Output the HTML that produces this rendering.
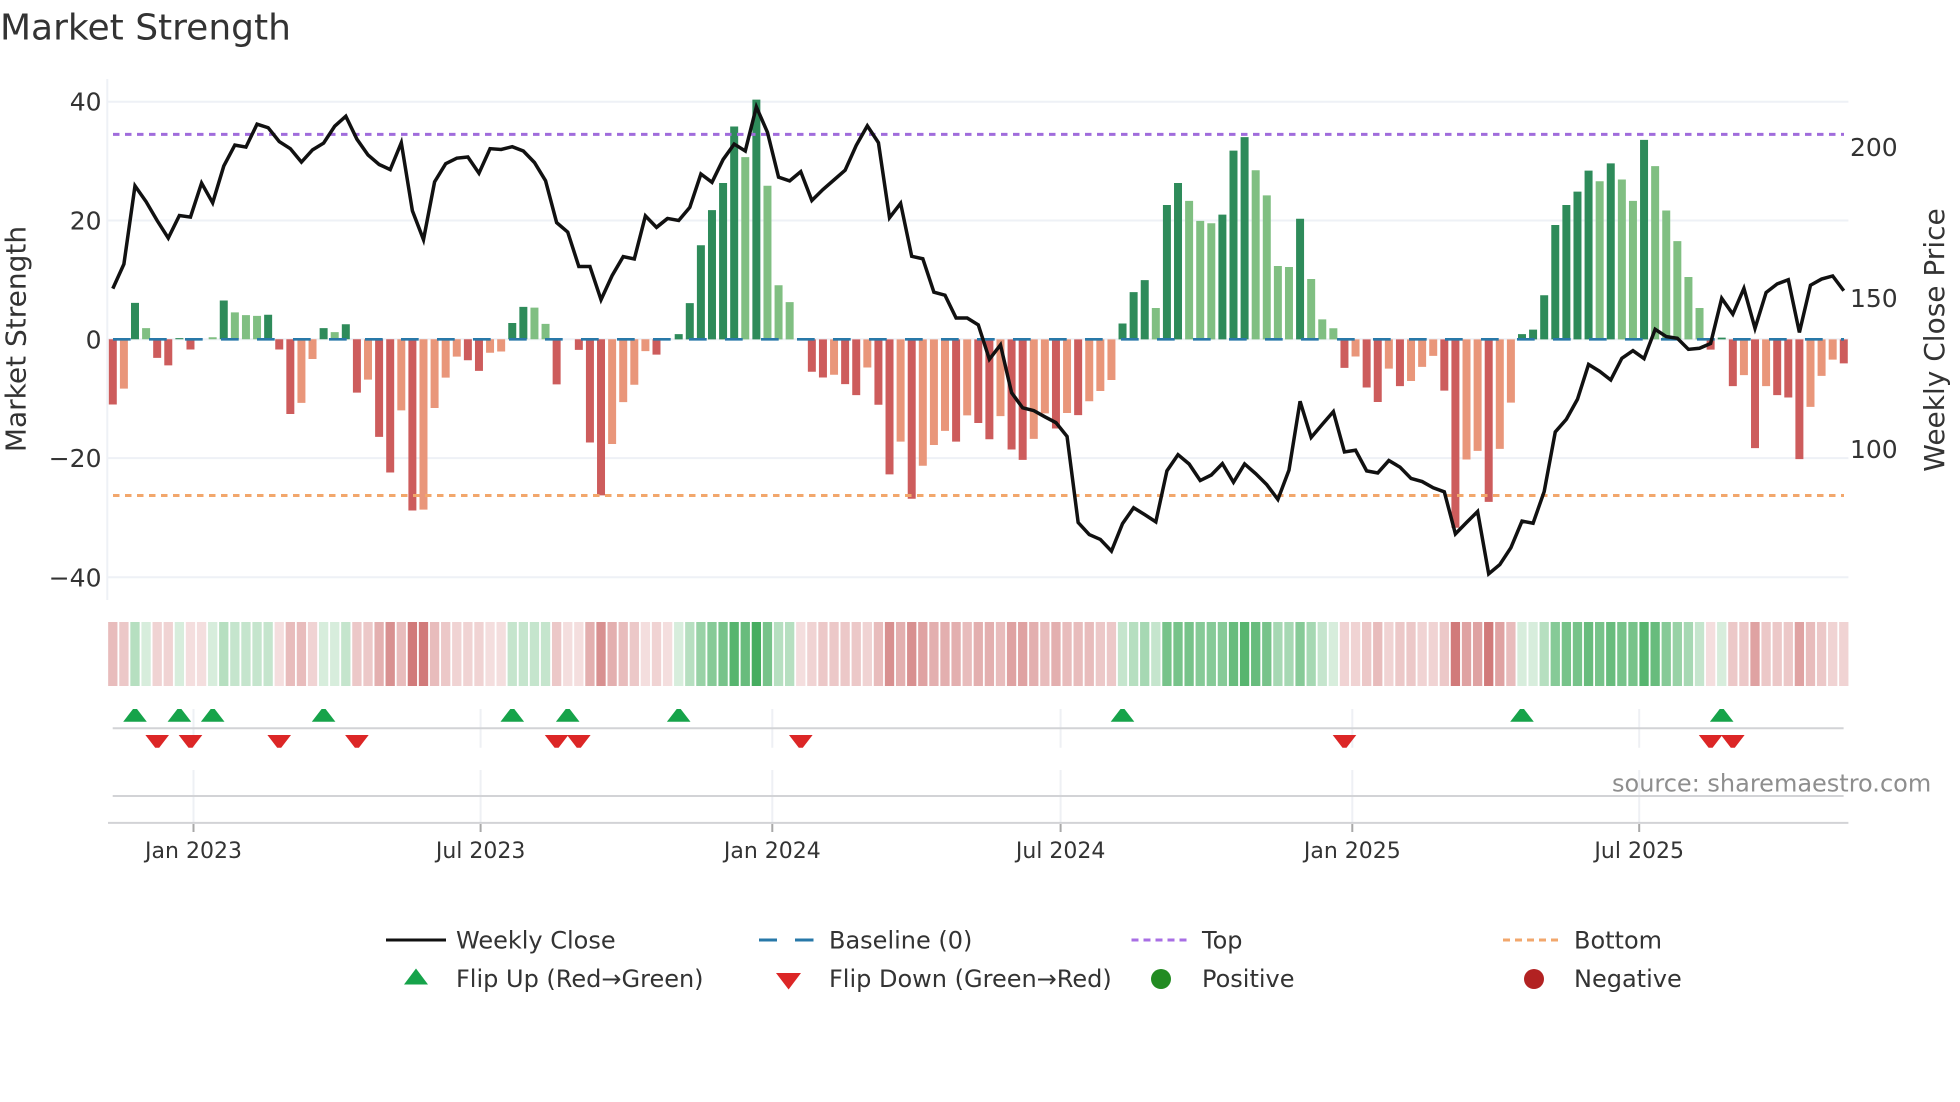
<!DOCTYPE html>
<html><head><meta charset="utf-8"><title>Market Strength</title>
<style>
html,body{margin:0;padding:0;background:#fff}
svg{display:block}
text{font-family:"DejaVu Sans","Liberation Sans",sans-serif;fill:#333}
</style></head>
<body>
<svg width="1960" height="1102" viewBox="0 0 1960 1102" xmlns="http://www.w3.org/2000/svg">
<rect width="1960" height="1102" fill="#fff"/>
<text x="0" y="39.5" font-size="36">Market Strength</text>

<!-- grid -->
<g stroke="#EEF1F6" stroke-width="2" fill="none">
<path d="M107.3 79V600"/>
<path d="M107 101.7H1848.4M107 220.5H1848.4M107 339.3H1848.4M107 458.1H1848.4M107 577.3H1848.4"/>
</g>

<!-- bars group 1 -->
<g transform="translate(112.8,0) scale(11.096,0.3954)" stroke-width="0.72" fill="none">
<path stroke="#2E8B5A" d="M2 858V766M6 858V855M10 858V760M14 858V796M19 858V830M21 858V820M36 858V817M37 858V776"/>
<path stroke="#80BF82" d="M3 858V830M9 858V853M11 858V790M12 858V797M13 858V799M20 858V840M38 858V778M39 858V819"/>
<path stroke="#CD5C5C" d="M0 858V1023M4 858V905M5 858V924M7 858V884M15 858V884M16 858V1047M22 858V993M24 858V1105M25 858V1195M27 858V1291M32 858V911M33 858V938M40 858V972M42 858V885M43 858V1119M44 858V1253M49 858V897"/>
<path stroke="#E9967A" d="M1 858V983M17 858V1019M18 858V908M23 858V960M26 858V1038M28 858V1289M29 858V1032M30 858V955M31 858V902M34 858V892M35 858V889M45 858V1123M46 858V1017M47 858V973M48 858V888"/>
</g>
<!-- bars group 2 -->
<g transform="translate(112.8,80) scale(11.096,0.34438)" stroke-width="0.72" fill="none">
<path stroke="#2E8B5A" d="M51 753V738M52 753V648M53 753V480M54 753V378M55 753V299M56 753V135M58 753V57M91 753V707M92 753V616M93 753V581M95 753V363M96 753V299M100 753V391M101 753V205M102 753V166M107 753V403M127 753V738M128 753V725M129 753V625M130 753V421M131 753V363M132 753V324M133 753V263M135 753V242M138 753V174M145 753V748"/>
<path stroke="#80BF82" d="M57 753V224M59 753V307M60 753V596M61 753V645M94 753V662M97 753V351M98 753V409M99 753V416M103 753V262M104 753V335M105 753V540M106 753V543M108 753V578M109 753V695M110 753V721M134 753V294M136 753V289M137 753V351M139 753V250M140 753V379M141 753V468M142 753V572M143 753V662"/>
<path stroke="#CD5C5C" d="M63 753V847M64 753V864M66 753V883M67 753V915M69 753V943M70 753V1145M72 753V1216M76 753V1050M78 753V996M79 753V1043M81 753V1073M82 753V1103M85 753V1012M87 753V973M111 753V836M113 753V893M114 753V935M116 753V889M120 753V902M121 753V1300M124 753V1225M144 753V783M146 753V889M148 753V1069M150 753V915M151 753V922M152 753V1101M156 753V823"/>
<path stroke="#E9967A" d="M65 753V856M68 753V835M71 753V1050M73 753V1120M74 753V1060M75 753V1019M77 753V974M80 753V976M83 753V1042M84 753V968M86 753V967M88 753V933M89 753V903M90 753V871M112 753V803M115 753V838M117 753V874M118 753V833M119 753V801M122 753V1102M123 753V1077M125 753V1071M126 753V937M147 753V857M149 753V889M153 753V949M154 753V859M155 753V812"/>
</g>

<!-- baseline, top, bottom -->
<path d="M113 339.3H1844" stroke="#2878A8" stroke-width="2.6" stroke-dasharray="17.7 18.3" fill="none"/>
<path d="M113 134.4H1844" stroke="#A06CDC" stroke-width="3" stroke-dasharray="6.5 5.5" fill="none"/>
<path d="M113 495.5H1844" stroke="#F2A76C" stroke-width="3" stroke-dasharray="6.5 5.5" fill="none"/>

<!-- weekly close -->
<g transform="translate(112.8,0) scale(11.096,0.3954)" fill="none">
<polyline vector-effect="non-scaling-stroke" stroke="#111" stroke-width="3.5" points="0,730 1,668 2,470 3,510 4,558 5,602 6,545 7,549 8,463 9,513 10,420 11,367 12,372 13,314 14,323 15,358 16,376 17,410 18,379 19,362 20,319 21,294 22,352 23,392 24,416 25,429 26,361 27,533 28,606 29,460 30,414 31,400 32,397 33,438 34,376 35,378 36,371 37,382 38,411 39,457 40,563 41,587 42,674 43,674 44,758 45,697 46,649 47,655 48,546 49,575 50,552.4"/>
</g>
<g transform="translate(112.8,80) scale(11.096,0.34438)" fill="none">
<polyline vector-effect="non-scaling-stroke" stroke="#111" stroke-width="3.5" points="49,428 50,402 51,408 52,370 53,273 54,297 55,231 56,186 57,206 58,78 59,152 60,282 61,293 62,266 63,350 64,318 65,290 66,262 67,190 68,133 69,182 70,400 71,358 72,512 73,519 74,616 75,625 76,691 77,691 78,711 79,811 80,769 81,908 82,952 83,960 84,978 85,995 86,1035 87,1285 88,1320 89,1334 90,1368 91,1288 92,1242 93,1262 94,1283 95,1135 96,1088 97,1115 98,1163 99,1147 100,1114 101,1168 102,1115 103,1143 104,1175 105,1218 106,1133 107,933 108,1038 109,1000 110,963 111,1080 112,1075 113,1135 114,1141 115,1105 116,1124 117,1157 118,1166 119,1184 120,1196 121,1318 122,1285 123,1253 124,1434 125,1407 126,1358 127,1281 128,1287 129,1195 130,1022 131,985 132,927 133,826 134,846 135,871 136,808 137,786 138,809 139,724 140,745 141,750 142,782 143,779 144,765 145,634 146,680 147,605 148,721 149,617 150,592 151,580 152,733 153,596 154,578 155,569 156,612"/>
</g>

<!-- axis labels -->
<g font-size="25" text-anchor="end">
<text x="101.5" y="110.7">40</text>
<text x="101.5" y="229.6">20</text>
<text x="101.5" y="348.4">0</text>
<text x="101.5" y="467.2">−20</text>
<text x="101.5" y="586.4">−40</text>
</g>
<g font-size="25">
<text x="1850" y="156.2">200</text>
<text x="1850" y="307">150</text>
<text x="1850" y="458.2">100</text>
</g>
<text transform="translate(25.5,339) rotate(-90)" font-size="28" text-anchor="middle">Market Strength</text>
<text transform="translate(1944,340) rotate(-90)" font-size="28" text-anchor="middle">Weekly Close Price</text>

<!-- heat strip -->
<g transform="translate(112.8,622) scale(11.096,1)" stroke-width="0.838" fill="none">
<g stroke="#28A046">
<path stroke-opacity=".19" d="M3 0v64M6 0v64M9 0v64M19 0v64M20 0v64M51 0v64M110 0v64M127 0v64M128 0v64M145 0v64"/>
<path stroke-opacity=".27" d="M11 0v64M12 0v64M13 0v64M14 0v64M21 0v64M36 0v64M37 0v64M38 0v64M39 0v64M91 0v64M94 0v64M109 0v64M143 0v64"/>
<path stroke-opacity=".34" d="M2 0v64M10 0v64M52 0v64M60 0v64M61 0v64M92 0v64M129 0v64"/>
<path stroke-opacity=".41" d="M93 0v64M105 0v64M106 0v64M108 0v64M142 0v64"/>
<path stroke-opacity=".48" d="M53 0v64M141 0v64"/>
<path stroke-opacity=".56" d="M54 0v64M98 0v64M99 0v64M100 0v64M107 0v64M130 0v64M140 0v64"/>
<path stroke-opacity=".63" d="M55 0v64M59 0v64M95 0v64M96 0v64M97 0v64M104 0v64M131 0v64M132 0v64M134 0v64M136 0v64M137 0v64"/>
<path stroke-opacity=".7" d="M57 0v64M101 0v64M103 0v64M133 0v64M135 0v64M139 0v64"/>
<path stroke-opacity=".78" d="M56 0v64M102 0v64M138 0v64"/>
<path stroke-opacity=".86" d="M58 0v64"/>
</g>
<g stroke="#B22222">
<path stroke-opacity=".15" d="M7 0v64M8 0v64M15 0v64M34 0v64M35 0v64M41 0v64M42 0v64M48 0v64M50 0v64M62 0v64M144 0v64"/>
<path stroke-opacity=".2" d="M4 0v64M5 0v64M18 0v64M31 0v64M32 0v64M33 0v64M49 0v64M63 0v64M68 0v64M111 0v64M112 0v64M115 0v64M118 0v64M119 0v64M155 0v64M156 0v64"/>
<path stroke-opacity=".25" d="M1 0v64M22 0v64M23 0v64M30 0v64M40 0v64M47 0v64M64 0v64M65 0v64M66 0v64M67 0v64M89 0v64M90 0v64M113 0v64M116 0v64M117 0v64M120 0v64M146 0v64M147 0v64M149 0v64M150 0v64M151 0v64M154 0v64"/>
<path stroke-opacity=".3" d="M0 0v64M16 0v64M17 0v64M26 0v64M29 0v64M46 0v64M69 0v64M77 0v64M80 0v64M84 0v64M86 0v64M87 0v64M88 0v64M114 0v64M126 0v64M153 0v64"/>
<path stroke-opacity=".36" d="M24 0v64M43 0v64M45 0v64M71 0v64M74 0v64M75 0v64M76 0v64M78 0v64M79 0v64M83 0v64M85 0v64"/>
<path stroke-opacity=".42" d="M73 0v64M81 0v64M82 0v64M122 0v64M123 0v64M125 0v64M148 0v64M152 0v64"/>
<path stroke-opacity=".5" d="M25 0v64M44 0v64M70 0v64M72 0v64"/>
<path stroke-opacity=".6" d="M27 0v64M28 0v64M121 0v64M124 0v64"/>
</g>
</g>

<!-- flip rows grid -->
<g stroke="#EEF0F4" stroke-width="2" fill="none">
<path d="M193.5 709V747.7M480.6 709V747.7M772.3 709V747.7M1060.6 709V747.7M1352.3 709V747.7M1639.2 709V747.7"/>
<path d="M193.5 770V823M480.6 770V823M772.3 770V823M1060.6 770V823M1352.3 770V823M1639.2 770V823"/>
</g>
<g stroke="#D2D3D6" stroke-width="2" fill="none">
<path d="M112.7 728.2H1843.6"/>
<path d="M112.7 796H1843.6"/>
<path d="M108 822.9H1848.4"/>
</g>
<path d="M193.5 824V832M480.6 824V832M772.3 824V832M1060.6 824V832M1352.3 824V832M1639.2 824V832" stroke="#A8A8A8" stroke-width="2" fill="none"/>

<!-- up markers -->
<g fill="#16A34A">
<path transform="translate(135,709)" d="M-11.8 12.7L-2 0H2L11.8 12.7Z"/>
<path transform="translate(179.4,709)" d="M-11.8 12.7L-2 0H2L11.8 12.7Z"/>
<path transform="translate(212.7,709)" d="M-11.8 12.7L-2 0H2L11.8 12.7Z"/>
<path transform="translate(323.6,709)" d="M-11.8 12.7L-2 0H2L11.8 12.7Z"/>
<path transform="translate(512.3,709)" d="M-11.8 12.7L-2 0H2L11.8 12.7Z"/>
<path transform="translate(567.7,709)" d="M-11.8 12.7L-2 0H2L11.8 12.7Z"/>
<path transform="translate(678.7,709)" d="M-11.8 12.7L-2 0H2L11.8 12.7Z"/>
<path transform="translate(1122.5,709)" d="M-11.8 12.7L-2 0H2L11.8 12.7Z"/>
<path transform="translate(1522,709)" d="M-11.8 12.7L-2 0H2L11.8 12.7Z"/>
<path transform="translate(1721.7,709)" d="M-11.8 12.7L-2 0H2L11.8 12.7Z"/>
</g>
<!-- down markers -->
<g fill="#DC2626">
<path transform="translate(157.2,735)" d="M-11.8 0L-2 12.7H2L11.8 0Z"/>
<path transform="translate(190.5,735)" d="M-11.8 0L-2 12.7H2L11.8 0Z"/>
<path transform="translate(279.2,735)" d="M-11.8 0L-2 12.7H2L11.8 0Z"/>
<path transform="translate(356.9,735)" d="M-11.8 0L-2 12.7H2L11.8 0Z"/>
<path transform="translate(556.6,735)" d="M-11.8 0L-2 12.7H2L11.8 0Z"/>
<path transform="translate(578.8,735)" d="M-11.8 0L-2 12.7H2L11.8 0Z"/>
<path transform="translate(800.8,735)" d="M-11.8 0L-2 12.7H2L11.8 0Z"/>
<path transform="translate(1344.5,735)" d="M-11.8 0L-2 12.7H2L11.8 0Z"/>
<path transform="translate(1710.6,735)" d="M-11.8 0L-2 12.7H2L11.8 0Z"/>
<path transform="translate(1732.8,735)" d="M-11.8 0L-2 12.7H2L11.8 0Z"/>
</g>

<!-- x tick labels -->
<g font-size="22" text-anchor="middle">
<text x="193.5" y="858">Jan 2023</text>
<text x="480.6" y="858">Jul 2023</text>
<text x="772.3" y="858">Jan 2024</text>
<text x="1060.6" y="858">Jul 2024</text>
<text x="1352.3" y="858">Jan 2025</text>
<text x="1639.2" y="858">Jul 2025</text>
</g>

<text x="1612" y="791.7" font-size="24" style="fill:#8e8e8e">source: sharemaestro.com</text>

<!-- legend -->
<path d="M386 940H446" stroke="#111" stroke-width="3" fill="none"/>
<path d="M759 940H777M795 940H813.5" stroke="#2878A8" stroke-width="3" fill="none"/>
<path d="M1131.5 940H1186.5" stroke="#A86FE4" stroke-width="3" stroke-dasharray="7 5" fill="none"/>
<path d="M1503 940H1558.5" stroke="#F2A76C" stroke-width="3" stroke-dasharray="7 5" fill="none"/>
<path d="M404 984.5L416 968.5L428 984.5Z" fill="#16A34A"/>
<path d="M776 973L801 973L788.6 989.5Z" fill="#DC2626"/>
<circle cx="1161" cy="979" r="10" fill="#228B22"/>
<circle cx="1534" cy="979" r="10" fill="#B22222"/>
<g font-size="24">
<text x="456" y="948.5">Weekly Close</text>
<text x="829" y="948.5">Baseline (0)</text>
<text x="1202" y="948.5">Top</text>
<text x="1574" y="948.5">Bottom</text>
<text x="456" y="987">Flip Up (Red→Green)</text>
<text x="829" y="987">Flip Down (Green→Red)</text>
<text x="1202" y="987">Positive</text>
<text x="1574" y="987">Negative</text>
</g>
</svg>
</body></html>
